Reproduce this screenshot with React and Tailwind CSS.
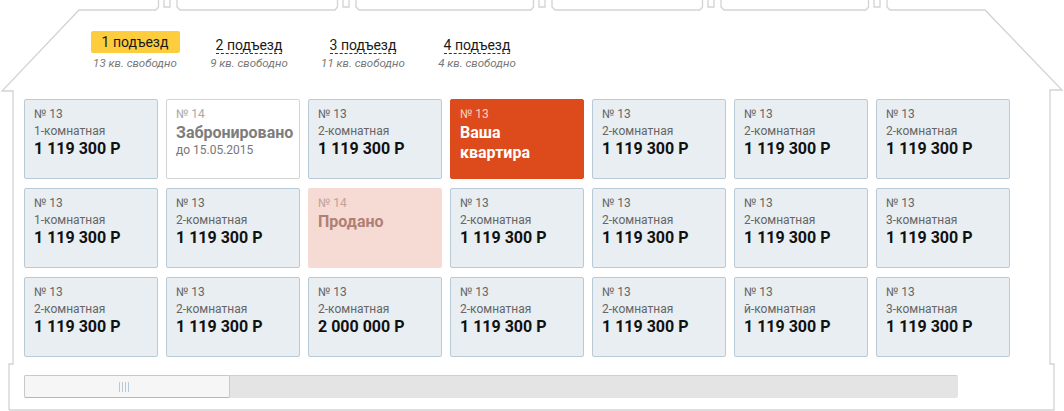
import { memo } from "react";

const tabs = [
  { title: "1 подъезд", free: "13 кв. свободно", active: true },
  { title: "2 подъезд", free: "9 кв. свободно" },
  { title: "3 подъезд", free: "11 кв. свободно" },
  { title: "4 подъезд", free: "4 кв. свободно" },
];

const f = (rooms, price = "1 119 300 Р") => ({ type: "free", num: 13, rooms, price });

const flats = [
  f("1-комнатная"),
  { type: "reserved", num: 14, until: "до 15.05.2015" },
  f("2-комнатная"),
  { type: "mine", num: 13 },
  f("2-комнатная"),
  f("2-комнатная"),
  f("2-комнатная"),

  f("1-комнатная"),
  f("2-комнатная"),
  { type: "sold", num: 14 },
  f("2-комнатная"),
  f("2-комнатная"),
  f("2-комнатная"),
  f("3-комнатная"),

  f("2-комнатная"),
  f("2-комнатная"),
  f("2-комнатная", "2 000 000 Р"),
  f("2-комнатная"),
  f("2-комнатная"),
  f("й-комнатная"),
  f("3-комнатная"),
];

// two little pipes sticking out of the roof line
const chimney = (x) =>
  `H${x} L${x + 2.5} 7 V-2 M${x + 8} -2 V7 H${x + 14} V-2 M${x + 21} -2 V7 L${x + 24} 10 `;

const housePath =
  "M9 410 V364 H13 V91 H2 L79 10 " +
  chimney(156) +
  chimney(335) +
  chimney(531) +
  chimney(700) +
  chimney(866) +
  "H985 L1062 90 H1050 V364 H1054 V410 H9";

const House = () => (
  <svg
    className="absolute inset-0 pointer-events-none"
    width="1064"
    height="411"
    viewBox="0 0 1064 411"
    fill="none"
  >
    <path d={housePath} stroke="#d3d3d3" strokeWidth="1.3" />
  </svg>
);

const Flat = memo(({ flat }) => {
  if (flat.type === "reserved") {
    return (
      <div className="h-[80px] rounded-[2px] border border-[#d4d4d4] bg-white pl-[9px] pt-[6px]">
        <div className="text-[12px] leading-[16.5px] text-[#a8a8a8]">№ {flat.num}</div>
        <div className="text-[16px] leading-[20px] font-bold text-[#7d7d7d]">
          Забронировано
        </div>
        <div className="text-[12px] leading-[14px] text-[#777]">{flat.until}</div>
      </div>
    );
  }
  if (flat.type === "sold") {
    return (
      <div className="h-[80px] rounded-[2px] border border-[#f6dad4] bg-[#f6dad4] pl-[9px] pt-[6px]">
        <div className="text-[12px] leading-[16.5px] text-[#c4a198]">№ {flat.num}</div>
        <div className="text-[16px] leading-[20px] font-bold text-[#b07f73]">Продано</div>
      </div>
    );
  }
  if (flat.type === "mine") {
    return (
      <div className="h-[80px] rounded-[2px] border border-[#dd4a1b] bg-[#dd4a1b] pl-[9px] pt-[6px] text-white">
        <div className="text-[12px] leading-[16.5px] text-[#f6d2c4]">№ {flat.num}</div>
        <div className="text-[16px] leading-[20px] font-bold">
          Ваша
          <br />
          квартира
        </div>
      </div>
    );
  }
  return (
    <div className="h-[80px] rounded-[2px] border border-[#b9cad7] bg-[#e8eef2] pl-[9px] pt-[6px]">
      <div className="text-[12px] leading-[16.5px] text-[#666]">№ {flat.num}</div>
      <div className="text-[12px] leading-[16px] text-[#666]">{flat.rooms}</div>
      <div className="text-[16px] leading-[20px] font-bold text-[#111]">{flat.price}</div>
    </div>
  );
});

export default function App() {
  return (
    <div className="relative w-[1064px] h-[411px] bg-white overflow-hidden font-[Roboto,sans-serif]">
      <House />
      <div className="relative flex pl-[78px] pt-[31px]">
        {tabs.map((t) => (
          <div key={t.title} className="flex w-[114px] flex-col items-center">
            {t.active ? (
              <div className="h-[22px] w-[89px] rounded-[2px] bg-[#fecd3d] text-center text-[14px] leading-[22px] text-[#1a1a1a]">
                {t.title}
              </div>
            ) : (
              <div className="h-[22px] pt-[2px]">
                <span className="border-b border-dashed border-[#333] text-[14px] leading-[17px] text-[#1a1a1a]">
                  {t.title}
                </span>
              </div>
            )}
            <div className="mt-[3px] text-[11.5px] leading-[14px] italic text-[#777]">
              {t.free}
            </div>
          </div>
        ))}
      </div>
      <div className="relative ml-[24px] mt-[29px] grid w-[986px] grid-cols-7 gap-x-[8px] gap-y-[9px]">
        {flats.map((fl, i) => (
          <Flat key={i} flat={fl} />
        ))}
      </div>
      <div className="relative ml-[24px] mt-[18px] h-[23px] w-[934px] rounded-[2px] border-t border-[#cfcfcf] bg-[#e4e4e4]">
        <div className="flex h-[23px] w-[206px] items-center justify-center rounded-[2px] border border-[#c9c9c9] border-b-[#a6bacb] bg-[#f7f6f7] -mt-px">
          <div className="mr-[6px] flex h-[10px] gap-[2px]">
            <div className="w-px bg-[#b8c8d6]" />
            <div className="w-px bg-[#b8c8d6]" />
            <div className="w-px bg-[#b8c8d6]" />
            <div className="w-px bg-[#b8c8d6]" />
          </div>
        </div>
      </div>
    </div>
  );
}
